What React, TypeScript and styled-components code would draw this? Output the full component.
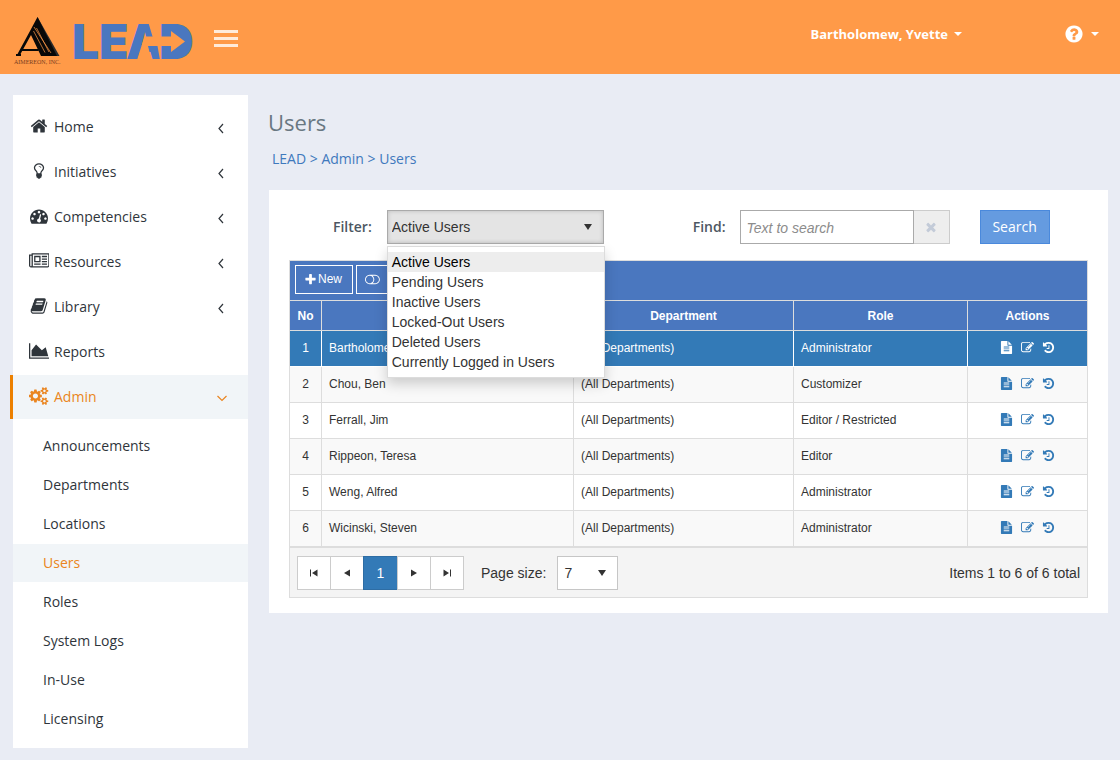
import React, { useState } from "react";
import styled, { createGlobalStyle, css } from "styled-components";

const Global = createGlobalStyle`
  *, *::before, *::after { box-sizing: border-box; }
  body {
    margin: 0;
    background: #e9ecf4;
    color: #333;
    font: 14px/20px "Open Sans", sans-serif;
  }
  button, input, select { font: inherit; margin: 0; }
  button { cursor: pointer; }
  a { text-decoration: none; }
  ul, ol { list-style: none; margin: 0; padding: 0; }
`;

const glyphs = {
  home: { w: 1792, d: "M1472 992v480q0 26-19 45t-45 19h-384v-384h-256v384h-384q-26 0-45-19t-19-45v-480q0-1 .5-3t.5-3l575-474 575 474q1 2 1 6zm223-69l-62 74q-8 9-21 11h-3q-13 0-21-7l-692-577-692 577q-12 8-24 7-13-2-21-11l-62-74q-8-10-7-23.5t11-21.5l719-599q32-26 76-26t76 26l244 204v-195q0-14 9-23t23-9h192q14 0 23 9t9 23v408l219 182q10 8 11 21.5t-7 23.5z" },
  bulb: { w: 1792, d: "M1120 576q0 13-9.5 22.5t-22.5 9.5-22.5-9.5-9.5-22.5q0-46-54-71t-106-25q-13 0-22.5-9.5t-9.5-22.5 9.5-22.5 22.5-9.5q50 0 99.5 16t87 54 37.5 90zm160 0q0-72-34.5-134t-90-101.5-123-62-136.5-22.5-136.5 22.5-123 62-90 101.5-34.5 134q0 101 68 180 10 11 30.5 33t30.5 33q128 153 141 298h228q13-145 141-298 10-11 30.5-33t30.5-33q68-79 68-180zm128 0q0 155-103 268-45 49-74.5 87t-59.5 95.5-34 107.5q47 28 47 82 0 37-25 64 25 27 25 64 0 52-45 81 13 23 13 47 0 46-31.5 71t-77.5 25q-20 44-60 70t-87 26-87-26-60-70q-46 0-77.5-25t-31.5-71q0-24 13-47-45-29-45-81 0-37 25-64-25-27-25-64 0-54 47-82-4-50-34-107.5t-59.5-95.5-74.5-87q-103-113-103-268 0-99 44.5-184.5t117-142 164-89 186.5-32.5 186.5 32.5 164 89 117 142 44.5 184.5z" },
  gauge: { w: 1792, d: "M384 1152q0-53-37.5-90.5t-90.5-37.5-90.5 37.5-37.5 90.5 37.5 90.5 90.5 37.5 90.5-37.5 37.5-90.5zm192-448q0-53-37.5-90.5t-90.5-37.5-90.5 37.5-37.5 90.5 37.5 90.5 90.5 37.5 90.5-37.5 37.5-90.5zm428 481l101-382q6-26-7.5-48.5t-38.5-29.5-48 6.5-30 39.5l-101 382q-60 5-107 43.5t-63 98.5q-20 77 20 146t117 89 146-20 89-117q16-60-6-117t-72-91zm660-33q0-53-37.5-90.5t-90.5-37.5-90.5 37.5-37.5 90.5 37.5 90.5 90.5 37.5 90.5-37.5 37.5-90.5zm-640-640q0-53-37.5-90.5t-90.5-37.5-90.5 37.5-37.5 90.5 37.5 90.5 90.5 37.5 90.5-37.5 37.5-90.5zm448 192q0-53-37.5-90.5t-90.5-37.5-90.5 37.5-37.5 90.5 37.5 90.5 90.5 37.5 90.5-37.5 37.5-90.5zm320 448q0 261-141 483-19 29-54 29h-1402q-35 0-54-29-141-221-141-483 0-182 71-348t191-286 286-191 348-71 348 71 286 191 191 286 71 348z" },
  news: { w: 2048, d: "M1024 512h-384v384h384v-384zm128 640v128h-640v-128h640zm0-768v640h-640v-640h640zm640 768v128h-512v-128h512zm0-256v128h-512v-128h512zm0-256v128h-512v-128h512zm0-256v128h-512v-128h512zm-1536 960v-960h-128v960q0 26 19 45t45 19 45-19 19-45zm1664 0v-1088h-1536v1088q0 33-11 64h1483q26 0 45-19t19-45zm128-1216v1216q0 80-56 136t-136 56h-1664q-80 0-136-56t-56-136v-1088h256v-128h1792z" },
  book: { w: 1792, d: "M1703 478q40 57 18 129l-275 906q-19 64-76.5 107.5t-122.5 43.5h-923q-77 0-148.5-53.5t-99.5-131.5q-24-67-2-127 0-4 3-27t4-37q1-8-3-21.5t-3-19.5q2-11 8-21t16.5-23.5 16.5-23.5q23-38 45-91.5t30-91.5q3-10 .5-30t-.5-28q3-11 17-28t17-23q21-36 42-92t25-90q1-9-2.5-32t.5-28q4-13 22-30.5t22-22.5q19-26 42.5-84.5t27.5-96.5q1-8-3-25.5t-2-26.5q2-8 9-18t18-23 17-21q8-12 16.5-30.5t15-35 16-36 19.5-32 26.5-23.5 36-11.5 47.5 5.5l-1 3q38-9 51-9h761q74 0 114 56t18 130l-274 906q-36 119-71.5 153.5t-128.5 34.5h-869q-27 0-38 15-11 16-1 43 24 70 144 70h923q29 0 56-15.5t35-41.5l300-987q7-22 5-57 38 15 59 43zm-1064 2q-4 13 2 22.5t20 9.5h608q13 0 25.5-9.5t16.5-22.5l21-64q4-13-2-22.5t-20-9.5h-608q-13 0-25.5 9.5t-16.5 22.5zm-83 256q-4 13 2 22.5t20 9.5h608q13 0 25.5-9.5t16.5-22.5l21-64q4-13-2-22.5t-20-9.5h-608q-13 0-25.5 9.5t-16.5 22.5z" },
  chart: { w: 2048, d: "M2048 1536v128h-2048v-1536h128v1408h1920zm-384-1024l256 896h-1664v-576l448-576 576 576z" },
  cogs: { w: 1920, d: "M896 896q0-106-75-181t-181-75-181 75-75 181 75 181 181 75 181-75 75-181zm768 512q0-52-38-90t-90-38-90 38-38 90q0 53 37.5 90.5t90.5 37.5 90.5-37.5 37.5-90.5zm0-1024q0-52-38-90t-90-38-90 38-38 90q0 53 37.5 90.5t90.5 37.5 90.5-37.5 37.5-90.5zm-384 421v185q0 10-7 19.5t-16 10.5l-155 24q-11 35-32 76 34 48 90 115 7 11 7 20 0 12-7 19-23 30-82.5 89.5t-78.5 59.5q-11 0-21-7l-115-90q-37 19-77 31-11 108-23 155-7 24-30 24h-186q-11 0-20-7.5t-10-17.5l-23-153q-34-10-75-31l-118 89q-7 7-20 7-11 0-21-8-144-133-144-160 0-9 7-19 10-14 41-53t47-61q-23-44-35-82l-152-24q-10-1-17-9.5t-7-19.5v-185q0-10 7-19.5t16-10.5l155-24q11-35 32-76-34-48-90-115-7-11-7-20 0-12 7-20 22-30 82-89t79-59q11 0 21 7l115 90q34-18 77-32 11-108 23-154 7-24 30-24h186q11 0 20 7.5t10 17.5l23 153q34 10 75 31l118-89q8-7 20-7 11 0 21 8 144 133 144 160 0 8-7 19-12 16-42 54t-45 60q23 48 34 82l152 23q10 2 17 10.5t7 19.5zm640 533v140q0 16-149 31-12 27-30 52 51 113 51 138 0 4-4 7-122 71-124 71-8 0-46-47t-52-68q-20 2-30 2t-30-2q-14 21-52 68t-46 47q-2 0-124-71-4-3-4-7 0-25 51-138-18-25-30-52-149-15-149-31v-140q0-16 149-31 13-29 30-52-51-113-51-138 0-4 4-7 4-2 35-20t59-34 30-16q8 0 46 46.5t52 67.5q20-2 30-2t30 2q51-71 92-112l6-2q4 0 124 70 4 3 4 7 0 25-51 138 17 23 30 52 149 15 149 31zm0-1024v140q0 16-149 31-12 27-30 52 51 113 51 138 0 4-4 7-122 71-124 71-8 0-46-47t-52-68q-20 2-30 2t-30-2q-14 21-52 68t-46 47q-2 0-124-71-4-3-4-7 0-25 51-138-18-25-30-52-149-15-149-31v-140q0-16 149-31 13-29 30-52-51-113-51-138 0-4 4-7 4-2 35-20t59-34 30-16q8 0 46 46.5t52 67.5q20-2 30-2t30 2q51-71 92-112l6-2q4 0 124 70 4 3 4 7 0 25-51 138 17 23 30 52 149 15 149 31z" },
  question: { w: 1792, d: "M1024 1376v-192q0-14-9-23t-23-9h-192q-14 0-23 9t-9 23v192q0 14 9 23t23 9h192q14 0 23-9t9-23zm256-672q0-88-55.5-163t-138.5-116-170-41q-243 0-371 213-15 24 8 42l132 100q7 6 19 6 16 0 25-12 53-68 86-92 34-24 86-24 48 0 85.5 26t37.5 59q0 38-20 61t-68 45q-63 28-115.5 86.5t-52.5 125.5v36q0 14 9 23t23 9h192q14 0 23-9t9-23q0-19 21.5-49.5t54.5-49.5q32-18 49-28.5t46-35 44.5-48 28-60.5 12.5-81zm384 192q0 209-103 385.5t-279.5 279.5-385.5 103-385.5-103-279.5-279.5-103-385.5 103-385.5 279.5-279.5 385.5-103 385.5 103 279.5 279.5 103 385.5z" },
  plus: { w: 1792, d: "M1600 736v192q0 40-28 68t-68 28h-416v416q0 40-28 68t-68 28h-192q-40 0-68-28t-28-68v-416h-416q-40 0-68-28t-28-68v-192q0-40 28-68t68-28h416v-416q0-40 28-68t68-28h192q40 0 68 28t28 68v416h416q40 0 68 28t28 68z" },
  times: { w: 1792, d: "M1490 1322q0 40-28 68l-136 136q-28 28-68 28t-68-28l-294-294-294 294q-28 28-68 28t-68-28l-136-136q-28-28-28-68t28-68l294-294-294-294q-28-28-28-68t28-68l136-136q28-28 68-28t68 28l294 294 294-294q28-28 68-28t68 28l136 136q28 28 28 68t-28 68l-294 294 294 294q28 28 28 68z" },
  toggle: { w: 2048, d: "M1152 896q0-104-40.5-198.5t-109.5-163.5-163.5-109.5-198.5-40.5-198.5 40.5-163.5 109.5-109.5 163.5-40.5 198.5 40.5 198.5 109.5 163.5 163.5 109.5 198.5 40.5 198.5-40.5 163.5-109.5 109.5-163.5 40.5-198.5zm768 0q0-104-40.5-198.5t-109.5-163.5-163.5-109.5-198.5-40.5h-386q119 90 188.5 224t69.5 288-69.5 288-188.5 224h386q104 0 198.5-40.5t163.5-109.5 109.5-163.5 40.5-198.5zm128 0q0 130-51 248.5t-136.5 204-204 136.5-248.5 51h-768q-130 0-248.5-51t-204-136.5-136.5-204-51-248.5 51-248.5 136.5-204 204-136.5 248.5-51h768q130 0 248.5 51t204 136.5 136.5 204 51 248.5z" },
  file: { w: 1792, d: "M1596 476q14 14 28 36h-472v-472q22 14 36 28zm-476 164h544v1056q0 40-28 68t-68 28h-1344q-40 0-68-28t-28-68v-1600q0-40 28-68t68-28h800v544q0 40 28 68t68 28zm160 736v-64q0-14-9-23t-23-9h-704q-14 0-23 9t-9 23v64q0 14 9 23t23 9h704q14 0 23-9t9-23zm0-256v-64q0-14-9-23t-23-9h-704q-14 0-23 9t-9 23v64q0 14 9 23t23 9h704q14 0 23-9t9-23zm0-256v-64q0-14-9-23t-23-9h-704q-14 0-23 9t-9 23v64q0 14 9 23t23 9h704q14 0 23-9t9-23z" },
  edit: { w: 1792, d: "M888 1184l116-116-152-152-116 116v56h96v96h56zm440-720q-16-16-33 1l-350 350q-17 17-1 33t33-1l350-350q17-17 1-33zm80 594v190q0 119-84.5 203.5t-203.5 84.5h-832q-119 0-203.5-84.5t-84.5-203.5v-832q0-119 84.5-203.5t203.5-84.5h832q63 0 117 25 15 7 18 23 3 17-9 29l-49 49q-14 14-32 8-23-6-45-6h-832q-66 0-113 47t-47 113v832q0 66 47 113t113 47h832q66 0 113-47t47-113v-126q0-13 9-22l64-64q15-15 35-7t20 29zm-96-738l288 288-672 672h-288v-288zm444 132l-92 92-288-288 92-92q28-28 68-28t68 28l152 152q28 28 28 68t-28 68z" },
  history: { w: 1792, d: "M1664 896q0 156-61 298t-164 245-245 164-298 61q-172 0-327-72.5t-264-204.5q-7-10-6.5-22.5t8.5-20.5l137-138q10-9 25-9 16 2 23 12 73 95 179 147t225 52q104 0 198.5-40.5t163.5-109.5 109.5-163.5 40.5-198.5-40.5-198.5-109.5-163.5-163.5-109.5-198.5-40.5q-98 0-188 35.5t-160 101.5l137 138q31 30 14 69-17 40-59 40h-448q-26 0-45-19t-19-45v-448q0-42 40-59 39-17 69 14l130 129q107-101 244.5-156.5t284.5-55.5q156 0 298 61t245 164 164 245 61 298zm-640-288v448q0 14-9 23t-23 9h-320q-14 0-23-9t-9-23v-64q0-14 9-23t23-9h224v-352q0-14 9-23t23-9h64q14 0 23 9t9 23z" },
};
type GlyphName = keyof typeof glyphs;

const Svg = styled.svg`
  display: block;
  flex: none;
  fill: currentColor;
`;

function Icon({ name, size }: { name: GlyphName; size: number }) {
  const g = glyphs[name];
  return (
    <Svg aria-hidden width={(size * g.w) / 1792} height={size} viewBox={`0 0 ${g.w} 1792`}>
      <path d={g.d} />
    </Svg>
  );
}

/* ---------- header ---------- */

const Header = styled.header`
  display: flex;
  align-items: center;
  height: 74px;
  padding: 0 21px 0 13px;
  background: #ff9a48;
  color: #fff;
`;
const LogoLink = styled.a`
  display: block;
`;
const MenuButton = styled.button`
  display: flex;
  flex-direction: column;
  gap: 4px;
  width: 24px;
  margin-left: 16px;
  padding: 2px 0 0;
  border: 0;
  background: none;
`;
const Bar = styled.span`
  height: 3px;
  background: rgba(255, 255, 255, 0.8);
`;
const HeaderButton = styled.button<{ $push?: boolean }>`
  display: flex;
  align-items: center;
  gap: 6px;
  margin-left: ${(p) => (p.$push ? "auto" : "102px")};
  padding: 0 0 6px;
  border: 0;
  background: none;
  color: #fff;
  font-size: 13px;
  font-weight: 700;
`;
const HelpGap = styled.span`
  display: flex;
  align-items: center;
  gap: 7px;
`;
const Caret = styled.span`
  width: 0;
  height: 0;
  border: 4px solid transparent;
  border-top-color: #fff;
  border-bottom: 0;
`;

function Logo() {
  return (
    <Svg width="185" height="74" viewBox="13 0 185 74" role="img" aria-label="Aimereon LEAD">
      <path d="M37.500 17L59.500 56H52L36 24z" fill="#2b2b2b" />
      <g fill="#080808">
        <path d="M37.500 17L57 56H41L31 35L20.500 54H21V56H16V54H17.500L30 31z" />
        <path d="M21 49H38L39 51H20z" />
      </g>
      <path d="M33.500 31L45 52.500M36.500 28L49 52M34 27L51 53" stroke="#ff9a48" strokeWidth="0.700" fill="none" />
      <text x="14" y="64" fontFamily="Liberation Serif, serif" fontSize="6" fill="#7a3d20">AIMEREON, INC.</text>
      <g fontFamily="Inter, sans-serif" fontWeight="900" fontSize="48" fill="#4a77bf">
        <text x="72" y="59">L</text>
        <text x="99" y="59">E</text>
        <text x="126" y="59">A</text>
      </g>
      <path d="M148.500 23L152.500 36.500L157.500 46L160 60H166V23z" fill="#ff9a48" />
      <text x="159" y="59" fontFamily="Inter, sans-serif" fontWeight="900" fontSize="48" fill="#4a77bf">D</text>
      <rect x="167" y="30" width="18" height="23" fill="#4a77bf" />
      <path d="M137 60L144.500 36.500H171V31L185 41.500L171 52V46H148L151.500 60z" fill="#ff9a48" />
    </Svg>
  );
}

/* ---------- sidebar ---------- */

const Body = styled.div`
  display: flex;
  align-items: flex-start;
  gap: 20px;
  padding: 21px 12px 12px 13px;
`;
const Sidebar = styled.nav`
  flex: none;
  width: 235px;
  padding: 10px 0;
  background: #fff;
`;
const NavList = styled.ul`
  display: flex;
  flex-direction: column;
  gap: 1px;
`;
const activeNav = css`
  margin-left: -3px;
  border-left: 3px solid #ec8000;
  background: #f1f5f8;
  color: #ea8520;
`;
const NavLink = styled.a<{ $active?: boolean }>`
  display: flex;
  align-items: center;
  height: 44px;
  padding: 0 21px 0 15px;
  color: #2f353b;
  ${(p) => p.$active && activeNav}
`;
const NavIcon = styled.span`
  display: flex;
  justify-content: center;
  width: 22px;
  margin-right: 4px;
  padding-bottom: 2px;
`;
const NavText = styled.span`
  flex: 1;
`;
const Arrow = styled.svg`
  display: block;
  width: 12px;
  height: 12px;
  margin-top: 2px;
  fill: none;
  stroke: currentColor;
  stroke-width: 1.2;
`;
const SubList = styled(NavList)`
  padding-top: 8px;
`;
const SubLink = styled.a<{ $active?: boolean }>`
  display: flex;
  align-items: center;
  height: 38px;
  padding-left: 30px;
  background: ${(p) => (p.$active ? "#f1f5f8" : "none")};
  color: ${(p) => (p.$active ? "#ea8520" : "#2f353b")};
`;

const nav: { label: string; icon: GlyphName; arrow?: boolean; active?: boolean }[] = [
  { label: "Home", icon: "home", arrow: true },
  { label: "Initiatives", icon: "bulb", arrow: true },
  { label: "Competencies", icon: "gauge", arrow: true },
  { label: "Resources", icon: "news", arrow: true },
  { label: "Library", icon: "book", arrow: true },
  { label: "Reports", icon: "chart" },
  { label: "Admin", icon: "cogs", arrow: true, active: true },
];
const adminPages = ["Announcements", "Departments", "Locations", "Users", "Roles", "System Logs", "In-Use", "Licensing"];

/* ---------- content ---------- */

const Main = styled.main`
  flex: 1;
  min-width: 0;
`;
const Title = styled.h1`
  margin: 0;
  padding-top: 12px;
  color: #697882;
  font-size: 22px;
  font-weight: 400;
  line-height: 30px;
`;
const Crumbs = styled.nav`
  padding: 12px 4px 21px;
  color: #3f79bd;
  a { color: inherit; }
`;
const Card = styled.section`
  margin-left: 1px;
  padding: 20px 20px 15px;
  background: #fff;
`;
const Filters = styled.form`
  display: flex;
  align-items: center;
  padding-left: 44px;
`;
const Label = styled.label`
  margin-right: 15px;
  color: #4d5762;
  font-weight: 600;
`;
const SelectWrap = styled.div`
  position: relative;
  font-family: "Liberation Sans", Arial, sans-serif;
`;
const Select = styled.select<{ $open?: boolean }>`
  display: block;
  appearance: none;
  width: ${(p) => (p.$open ? "217px" : "61px")};
  height: 34px;
  padding: 0 ${(p) => (p.$open ? "4px" : "6px")};
  border: 1px solid ${(p) => (p.$open ? "#aaa" : "#c6c6c6")};
  border-radius: 0;
  outline: 0;
  background: ${(p) => (p.$open ? "#e4e4e4" : "#fff")};
  box-shadow: ${(p) => (p.$open ? "inset 0 0 4px rgba(0, 0, 0, 0.18)" : "none")};
  color: #333;
`;
const SelectArrow = styled.span`
  position: absolute;
  top: 14px;
  right: 12px;
  border: 4px solid transparent;
  border-top: 6px solid #333;
  border-bottom: 0;
  pointer-events: none;
`;
const Menu = styled.ul`
  position: absolute;
  z-index: 2;
  top: 36px;
  left: 0;
  width: 218px;
  padding: 5px 0;
  border: 1px solid #dcdcdc;
  background: #fff;
  box-shadow: 0 6px 12px rgba(0, 0, 0, 0.18);
`;
const Option = styled.li<{ $active: boolean }>`
  padding: 0 4px;
  background: ${(p) => (p.$active ? "#ededed" : "none")};
  color: ${(p) => (p.$active ? "#000" : "#333")};
  cursor: pointer;
`;
const FindLabel = styled(Label)`
  margin-left: 89px;
  margin-right: 14px;
`;
const FindInput = styled.input`
  width: 174px;
  height: 34px;
  padding: 2px 6px 0;
  border: 1px solid #aaa;
  border-radius: 0;
  background: #fff;
  font-family: "Liberation Sans", Arial, sans-serif;
  &::placeholder { color: #8c8c8c; font-style: italic; }
`;
const ClearButton = styled.button`
  display: flex;
  align-items: center;
  justify-content: center;
  width: 36px;
  height: 34px;
  border: 1px solid #ccc;
  border-left: 0;
  background: #eee;
  color: #c3cbd8;
`;
const SearchButton = styled.button`
  width: 70px;
  height: 34px;
  margin-left: 30px;
  padding: 0;
  border: 1px solid #4a89dc;
  background: #659be0;
  color: #fff;
`;

const Grid = styled.div`
  margin-top: 16px;
  border: 1px solid #ddd;
  font-family: "Liberation Sans", Arial, sans-serif;
`;
const Toolbar = styled.div`
  display: flex;
  gap: 3px;
  height: 39px;
  padding: 4px 5px;
  background: #4a77bf;
`;
const ToolButton = styled.button<{ $wide?: boolean }>`
  display: flex;
  align-items: center;
  gap: 1px;
  width: ${(p) => (p.$wide ? "150px" : "58px")};
  height: 29px;
  padding: 0 8px 1px;
  border: 1px solid #fff;
  background: none;
  color: #fff;
  font-size: 12px;
`;
const Table = styled.table`
  width: 100%;
  border-collapse: separate;
  border-spacing: 0;
  table-layout: fixed;
  font-size: 12px;
`;
const Th = styled.th<{ $w?: string }>`
  width: ${(p) => p.$w ?? "auto"};
  height: 31px;
  padding: 0 7px;
  border: solid #ddd;
  border-width: 1px 0 1px 1px;
  background: #4a77bf;
  color: #fff;
  text-align: center;
  &:first-child { border-left: 0; }
`;
const Td = styled.td`
  height: 36px;
  padding: 0 7px 2px;
  border: solid #ddd;
  border-width: 0 0 1px 1px;
  &:first-child { border-left: 0; padding: 0 0 2px; text-align: center; }
`;
const selectedRow = css`
  background: #337ab7;
  color: #fff;
  ${Td} { border-color: #fff; }
`;
const Row = styled.tr<{ $selected?: boolean }>`
  background: #fff;
  &:nth-child(even) { background: #f9f9f9; }
  ${(p) => p.$selected && selectedRow}
`;
const Actions = styled.div<{ $selected?: boolean }>`
  display: flex;
  justify-content: center;
  gap: 8px;
  color: ${(p) => (p.$selected ? "#fff" : "#337ab7")};
`;
const ActionButton = styled.button`
  padding: 0;
  border: 0;
  background: none;
  color: inherit;
`;

const Pager = styled.footer`
  display: flex;
  align-items: center;
  height: 50px;
  padding: 0 7px;
  border-top: 1px solid #ddd;
  background: #f4f4f4;
`;
const PageButtons = styled.div`
  display: flex;
  margin-right: 17px;
`;
const PageButton = styled.button<{ $current?: boolean }>`
  display: flex;
  align-items: center;
  justify-content: center;
  width: ${(p) => (p.$current ? "35px" : "34px")};
  height: 34px;
  padding: 0;
  border: 1px solid ${(p) => (p.$current ? "#2e6da4" : "#ccc")};
  background: ${(p) => (p.$current ? "#337ab7" : "#fff")};
  color: ${(p) => (p.$current ? "#fff" : "#333")};
  & + & { margin-left: -1px; }
`;
const PageLabel = styled.label`
  margin-right: 11px;
`;
const Summary = styled.span`
  margin-left: auto;
`;

const filters = ["Active Users", "Pending Users", "Inactive Users", "Locked-Out Users", "Deleted Users", "Currently Logged in Users"];
const users = [
  ["Bartholomew, Yvette", "Administrator"],
  ["Chou, Ben", "Customizer"],
  ["Ferrall, Jim", "Editor / Restricted"],
  ["Rippeon, Teresa", "Editor"],
  ["Weng, Alfred", "Administrator"],
  ["Wicinski, Steven", "Administrator"],
];
const pageIcons: Record<string, string> = {
  First: "M1 1.500h1v7H1zM8.500 1.500v7L3 5z",
  Previous: "M8 1.500v7L2 5z",
  Next: "M2 1.500v7L8 5z",
  Last: "M8 1.500h1v7H8zM1.500 1.500v7L7 5z",
};

function PageIcon({ name }: { name: string }) {
  return (
    <Svg aria-hidden width="10" height="10" viewBox="0 0 10 10">
      <path d={pageIcons[name]} />
    </Svg>
  );
}

export default function App() {
  const [filter, setFilter] = useState(filters[0]);
  return (
    <>
      <Global />
      <Header>
        <LogoLink href="#home"><Logo /></LogoLink>
        <MenuButton aria-label="Toggle menu"><Bar /><Bar /><Bar /></MenuButton>
        <HeaderButton $push>Bartholomew, Yvette<Caret /></HeaderButton>
        <HeaderButton aria-label="Help">
          <HelpGap><Icon name="question" size={20} /><Caret /></HelpGap>
        </HeaderButton>
      </Header>
      <Body>
        <Sidebar>
          <NavList>
            {nav.map((n) => (
              <li key={n.label}>
                <NavLink href={"#" + n.label} $active={n.active}>
                  <NavIcon><Icon name={n.icon} size={18} /></NavIcon>
                  <NavText>{n.label}</NavText>
                  {n.arrow && (
                    <Arrow viewBox="0 0 12 12" aria-hidden>
                      <path d={n.active ? "M2.500 4l4.500 4.500L11.500 4" : "M8 2L4 6.500L8 11"} />
                    </Arrow>
                  )}
                </NavLink>
              </li>
            ))}
          </NavList>
          <SubList>
            {adminPages.map((p) => (
              <li key={p}><SubLink href={"#" + p} $active={p === "Users"}>{p}</SubLink></li>
            ))}
          </SubList>
        </Sidebar>
        <Main>
          <Title>Users</Title>
          <Crumbs aria-label="Breadcrumb">
            <a href="#lead">LEAD</a> &gt; <a href="#admin">Admin</a> &gt; <a href="#users">Users</a>
          </Crumbs>
          <Card>
            <Filters onSubmit={(e) => e.preventDefault()}>
              <Label htmlFor="filter">Filter:</Label>
              <SelectWrap>
                <Select id="filter" $open value={filter} onChange={(e) => setFilter(e.target.value)}>
                  {filters.map((f) => <option key={f}>{f}</option>)}
                </Select>
                <SelectArrow />
                <Menu role="listbox" aria-label="Filter">
                  {filters.map((f) => (
                    <Option key={f} role="option" aria-selected={f === filter} $active={f === filter} onClick={() => setFilter(f)}>{f}</Option>
                  ))}
                </Menu>
              </SelectWrap>
              <FindLabel htmlFor="find">Find:</FindLabel>
              <FindInput id="find" placeholder="Text to search" />
              <ClearButton type="button" aria-label="Clear"><Icon name="times" size={14} /></ClearButton>
              <SearchButton>Search</SearchButton>
            </Filters>
            <Grid>
              <Toolbar>
                <ToolButton><Icon name="plus" size={13} />New</ToolButton>
                <ToolButton $wide aria-label="Toggle status"><Icon name="toggle" size={13} /></ToolButton>
              </Toolbar>
              <Table>
                <thead>
                  <tr>
                    <Th $w="31px">No</Th>
                    <Th aria-label="Name" />
                    <Th $w="220px">Department</Th>
                    <Th $w="174px">Role</Th>
                    <Th $w="120px">Actions</Th>
                  </tr>
                </thead>
                <tbody>
                  {users.map(([name, role], i) => (
                    <Row key={name} $selected={i === 0}>
                      <Td>{i + 1}</Td>
                      <Td>{name}</Td>
                      <Td>(All Departments)</Td>
                      <Td>{role}</Td>
                      <Td>
                        <Actions $selected={i === 0}>
                          <ActionButton aria-label="Details"><Icon name="file" size={13} /></ActionButton>
                          <ActionButton aria-label="Edit"><Icon name="edit" size={13} /></ActionButton>
                          <ActionButton aria-label="History"><Icon name="history" size={13} /></ActionButton>
                        </Actions>
                      </Td>
                    </Row>
                  ))}
                </tbody>
              </Table>
              <Pager>
                <PageButtons>
                  <PageButton aria-label="First page"><PageIcon name="First" /></PageButton>
                  <PageButton aria-label="Previous page"><PageIcon name="Previous" /></PageButton>
                  <PageButton $current>1</PageButton>
                  <PageButton aria-label="Next page"><PageIcon name="Next" /></PageButton>
                  <PageButton aria-label="Last page"><PageIcon name="Last" /></PageButton>
                </PageButtons>
                <PageLabel htmlFor="size">Page size:</PageLabel>
                <SelectWrap>
                  <Select id="size" defaultValue="7"><option>7</option><option>14</option><option>28</option></Select>
                  <SelectArrow />
                </SelectWrap>
                <Summary>Items 1 to 6 of 6 total</Summary>
              </Pager>
            </Grid>
          </Card>
        </Main>
      </Body>
    </>
  );
}
